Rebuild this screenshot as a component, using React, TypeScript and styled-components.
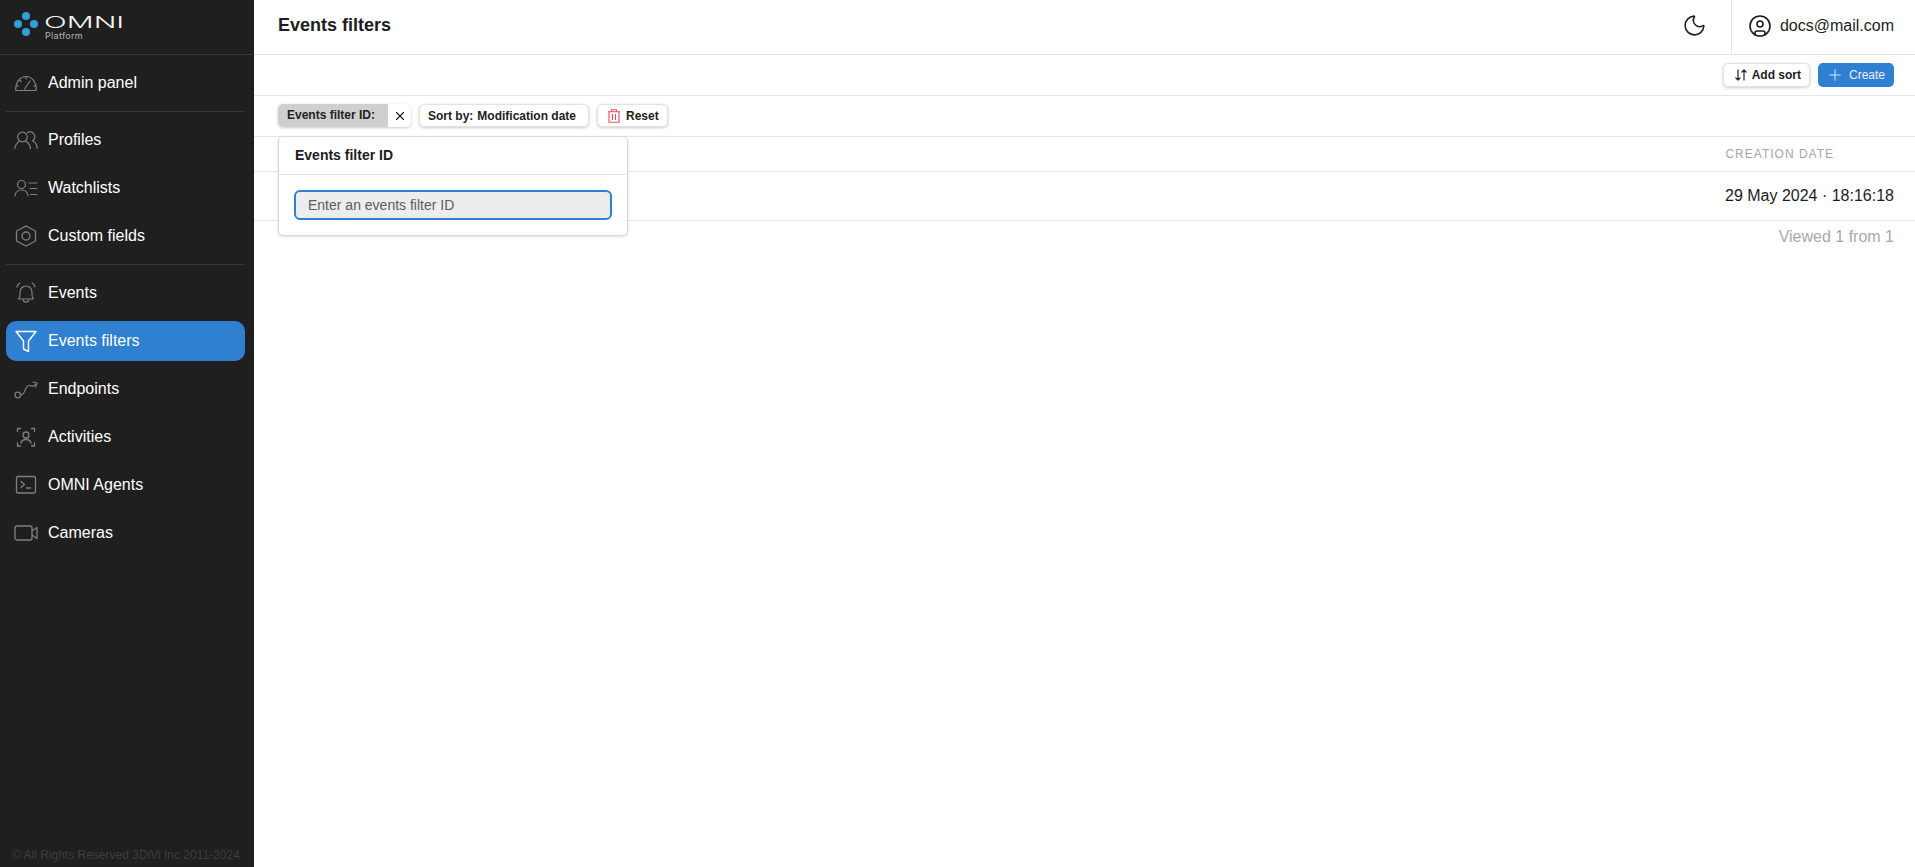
import React from 'react';
import styled, { createGlobalStyle } from 'styled-components';
import { X, Plus, Moon, CircleUser } from 'lucide-react';

const GlobalStyle = createGlobalStyle`
    html, body {
        margin: 0;
        padding: 0;
        height: 100%;
    }
    body {
        font-family: "Liberation Sans", Arial, sans-serif;
        color: #1d1d1d;
        background: #fff;
    }
    * {
        box-sizing: border-box;
    }
`;

const AdminIcon = () => (
    <svg width="24" height="24" viewBox="0 0 24 24" fill="none" stroke="currentColor" strokeWidth="1.2" strokeLinecap="round" strokeLinejoin="round">
        <path d="M2.500 19.500 h19 a.8.8 0 0 0 .8-.9 C22 10 17.500 5.500 12 5.500 S2 10 1.700 18.600 a.8.8 0 0 0 .8.9 Z" />
        <path d="M12 5.500 v2.500 M5.500 9 l1.500 1.500 M2 15 h2.500 M19.500 15 h2.500 M10.500 18 l5.500-8" />
    </svg>
);

const ProfilesIcon = () => (
    <svg width="24" height="24" viewBox="0 0 24 24" fill="none" stroke="currentColor" strokeWidth="1.2" strokeLinecap="round" strokeLinejoin="round">
        <circle cx="8.500" cy="9" r="4.800" />
        <path d="M.8 20.500 c.4-3.600 2.400-6 4.800-7.300 M11.400 13 c2.600 1.200 4.700 3.800 5.100 7.500" />
        <path d="M13.500 4.500 a4.800 4.800 0 0 1 5 8.300 c2.500 1 4.400 3.800 4.700 7.700" />
    </svg>
);

const WatchlistsIcon = () => (
    <svg width="24" height="24" viewBox="0 0 24 24" fill="none" stroke="currentColor" strokeWidth="1.2" strokeLinecap="round" strokeLinejoin="round">
        <circle cx="7.500" cy="8.500" r="4" />
        <path d="M1 20 c.3-3.600 2.200-6 6.500-6 s6.200 2.400 6.500 6" />
        <path d="M15 7 h8 M16 12.500 h7 M16.500 18.500 h6.500" />
    </svg>
);

const FieldsIcon = () => (
    <svg width="24" height="24" viewBox="0 0 24 24" fill="none" stroke="currentColor" strokeWidth="1.3" strokeLinejoin="round">
        <path d="M12 2 L21.500 7 V17 L12 22 L2.500 17 V7 Z" />
        <circle cx="12" cy="12" r="4" />
    </svg>
);

const EventsIcon = () => (
    <svg width="24" height="24" viewBox="0 0 24 24" fill="none" stroke="currentColor" strokeWidth="1.2" strokeLinecap="round" strokeLinejoin="round">
        <path d="M4.500 18 c1.800-1.500 1.500-4 1.500-7 a6 6 0 0 1 12 0 c0 3-.3 5.500 1.500 7 Z" />
        <path d="M9.200 18.500 c.3 3.600 5.300 3.600 5.600 0" />
        <path d="M3 6 c.4-1.800 1.300-3.100 2.700-4 M21 6 c-.4-1.800-1.300-3.100-2.700-4" />
    </svg>
);

const FiltersIcon = () => (
    <svg width="24" height="24" viewBox="0 0 24 24" fill="none" stroke="currentColor" strokeWidth="1.4" strokeLinejoin="round">
        <path d="M2 2.500 H22 L14.500 12 V22.500 L9.500 20 V12 Z" />
    </svg>
);

const EndpointsIcon = () => (
    <svg width="24" height="24" viewBox="0 0 24 24" fill="none" stroke="currentColor" strokeWidth="1.2" strokeLinecap="round" strokeLinejoin="round">
        <circle cx="3.800" cy="18" r="2.800" />
        <path d="M6.500 18 c3 0 3.500-2 4.500-4.500 s1.500-5 4.500-5 c2 0 2.500 1 4 .5 l3-2" />
        <path d="M19 5 l4 1 l-1.500 4" />
    </svg>
);

const ActivitiesIcon = () => (
    <svg width="24" height="24" viewBox="0 0 24 24" fill="none" stroke="currentColor" strokeWidth="1.3" strokeLinecap="round" strokeLinejoin="round">
        <path d="M3.500 6.500 V3.500 h3 M17.500 3.500 H20.500 V6.500 M20.500 18 v3 h-3 M6.500 21 H3.500 V18" />
        <circle cx="12" cy="10" r="3" />
        <path d="M7 18 c.5-2.300 2.300-3.500 5-3.500 s4.500 1.200 5 3.500" />
    </svg>
);

const AgentsIcon = () => (
    <svg width="24" height="24" viewBox="0 0 24 24" fill="none" stroke="currentColor" strokeWidth="1.3" strokeLinecap="round" strokeLinejoin="round">
        <rect x="2.500" y="3.500" width="19" height="16.500" rx="1.500" />
        <path d="M7 8.500 l3.500 3 l-3.500 3 M12.500 15 h4" />
    </svg>
);

const CamerasIcon = () => (
    <svg width="24" height="24" viewBox="0 0 24 24" fill="none" stroke="currentColor" strokeWidth="1.3" strokeLinejoin="round">
        <rect x="1" y="5" width="17" height="14" rx="2" />
        <path d="M18 10 L23 6.500 V17.500 L18 14" />
    </svg>
);

const SortIcon = () => (
    <svg width="12" height="14" viewBox="0 0 12 14" fill="none" stroke="currentColor" strokeWidth="1.2" strokeLinecap="round" strokeLinejoin="round">
        <path d="M3 2 V12 M.8 9.800 L3 12 L5.200 9.800" />
        <path d="M9 12 V2 M6.800 4.200 L9 2 L11.200 4.200" />
    </svg>
);

const TrashIcon = () => (
    <svg width="12" height="14" viewBox="0 0 12 14" fill="none" stroke="#e8505b" strokeWidth="1.1">
        <path d="M0 2.700 H12 M3.500 2.700 V.8 H8.500 V2.700" />
        <path d="M1 2.700 V13.300 H11 V2.700" />
        <path d="M4.500 5 V11 M7.500 5 V11" />
    </svg>
);

const Logo = () => (
    <LogoWrap>
        <svg width="24" height="24" viewBox="0 0 24 24">
            <circle cx="4" cy="12" r="4" fill="#2e9fd6" />
            <circle cx="12" cy="4" r="4" fill="#2e9fd6" />
            <circle cx="12" cy="20" r="4" fill="#2e9fd6" />
            <circle cx="20" cy="12" r="4" fill="#2e9fd6" />
        </svg>
        <LogoText>
            <LogoWord>OMNI</LogoWord>
            <LogoSub>Platform</LogoSub>
        </LogoText>
    </LogoWrap>
);

const groups = [
    [{ title: 'Admin panel', icon: <AdminIcon /> }],
    [
        { title: 'Profiles', icon: <ProfilesIcon /> },
        { title: 'Watchlists', icon: <WatchlistsIcon /> },
        { title: 'Custom fields', icon: <FieldsIcon /> },
    ],
    [
        { title: 'Events', icon: <EventsIcon /> },
        { title: 'Events filters', icon: <FiltersIcon />, active: true },
        { title: 'Endpoints', icon: <EndpointsIcon /> },
        { title: 'Activities', icon: <ActivitiesIcon /> },
        { title: 'OMNI Agents', icon: <AgentsIcon /> },
        { title: 'Cameras', icon: <CamerasIcon /> },
    ],
];

const App = () => {
    return (
        <Page>
            <GlobalStyle />
            <Sidebar>
                <Logo />
                <Nav>
                    {groups.map((group, index) => (
                        <NavGroup key={index}>
                            {group.map((item: any) => (
                                <NavItem key={item.title} $active={item.active}>
                                    <NavIcon $active={item.active}>{item.icon}</NavIcon>
                                    {item.title}
                                </NavItem>
                            ))}
                        </NavGroup>
                    ))}
                </Nav>
                <Copyright>© All Rights Reserved 3DiVi Inc 2011-2024</Copyright>
            </Sidebar>
            <Main>
                <Header>
                    <Title>Events filters</Title>
                    <ThemeToggle>
                        <Moon size={25} strokeWidth={1.5} />
                    </ThemeToggle>
                    <User>
                        <CircleUser size={24} strokeWidth={1.6} />
                        docs@mail.com
                    </User>
                </Header>
                <Toolbar>
                    <ChipButton>
                        <SortIcon />
                        Add sort
                    </ChipButton>
                    <CreateButton>
                        <Plus size={18} strokeWidth={1.2} />
                        Create
                    </CreateButton>
                </Toolbar>
                <Filters>
                    <FilterChip>
                        <FilterLabel>Events filter ID:</FilterLabel>
                        <FilterClear>
                            <X size={14} strokeWidth={2} />
                        </FilterClear>
                    </FilterChip>
                    <SortChip>
                        Sort by:<span>Modification date</span>
                    </SortChip>
                    <ResetChip>
                        <TrashIcon />
                        Reset
                    </ResetChip>
                    <Popup>
                        <PopupTitle>Events filter ID</PopupTitle>
                        <PopupBody>
                            <FilterInput placeholder="Enter an events filter ID" />
                        </PopupBody>
                    </Popup>
                </Filters>
                <TableHead>
                    <HeadCell>Creation date</HeadCell>
                </TableHead>
                <TableRow>
                    <DateCell>29 May 2024 · 18:16:18</DateCell>
                </TableRow>
                <Viewed>Viewed 1 from 1</Viewed>
            </Main>
        </Page>
    );
};

export default App;

const Page = styled.div`
    display: flex;
    height: 867px;
    overflow: hidden;
`;

const Sidebar = styled.aside`
    width: 254px;
    flex-shrink: 0;
    background: #1f1f1f;
    display: flex;
    flex-direction: column;
`;

const LogoWrap = styled.div`
    height: 55px;
    flex-shrink: 0;
    padding: 12px 0 0 14px;
    display: flex;
    align-items: flex-start;
    gap: 6px;
    border-bottom: 1px solid #383838;
`;

const LogoText = styled.div`
    padding-top: 3px;
    display: flex;
    flex-direction: column;
    align-items: flex-start;
`;

const LogoWord = styled.span`
    font-family: Inter, sans-serif;
    font-size: 16px;
    font-weight: 300;
    line-height: 15px;
    color: #f5f5f5;
    white-space: nowrap;
    transform: scaleX(1.87);
    transform-origin: left center;
`;

const LogoSub = styled.span`
    margin-top: 1px;
    font-family: Inter, sans-serif;
    font-size: 9px;
    line-height: 10px;
    letter-spacing: 0.3px;
    color: #b4b4b4;
    padding-left: 1px;
    white-space: nowrap;
`;

const Nav = styled.nav`
    flex: 1;
    padding: 0 9px 0 6px;
`;

const NavGroup = styled.div`
    display: flex;
    flex-direction: column;
    gap: 8px;
    padding: 8px 0 8px;
    border-bottom: 1px solid #383838;

    &:last-child {
        border-bottom: none;
    }
`;

const NavItem = styled.div<{ $active?: boolean }>`
    height: 40px;
    display: flex;
    align-items: center;
    padding-left: 8px;
    gap: 10px;
    border-radius: 10px;
    font-size: 16px;
    color: #fff;
    background: ${props => (props.$active ? '#2f80d0' : 'transparent')};
`;

const NavIcon = styled.span<{ $active?: boolean }>`
    width: 24px;
    height: 24px;
    display: flex;
    color: ${props => (props.$active ? '#fff' : '#808080')};
`;

const Copyright = styled.div`
    font-size: 12px;
    color: #3e3e3e;
    padding: 0 0 5px 12px;
    line-height: 14px;
`;

const Main = styled.main`
    flex: 1;
    min-width: 0;
    display: flex;
    flex-direction: column;
`;

const Header = styled.header`
    height: 55px;
    flex-shrink: 0;
    display: flex;
    align-items: stretch;
    border-bottom: 1px solid #e6e6e6;
    padding-left: 24px;
`;

const Title = styled.h1`
    flex: 1;
    margin: 0;
    font-size: 18px;
    font-weight: 700;
    line-height: 50px;
    color: #1d1d1d;
`;

const ThemeToggle = styled.div`
    width: 72px;
    display: flex;
    align-items: center;
    justify-content: center;
    padding-bottom: 3px;
`;

const User = styled.div`
    border-left: 1px solid #e6e6e6;
    padding: 0 21px 3px 16px;
    display: flex;
    align-items: center;
    gap: 8px;
    font-size: 16px;
`;

const Toolbar = styled.div`
    height: 41px;
    flex-shrink: 0;
    display: flex;
    align-items: flex-start;
    justify-content: flex-end;
    gap: 8px;
    padding: 8px 21px 0 0;
    border-bottom: 1px solid #e6e6e6;
`;

const ChipButton = styled.div`
    height: 24px;
    display: flex;
    align-items: center;
    gap: 5px;
    padding: 0 8px 0 11px;
    background: #fff;
    border: 1px solid #e2e2e2;
    border-radius: 5px;
    box-shadow: 0 1px 3px rgba(0, 0, 0, 0.2);
    font-size: 12px;
    font-weight: 700;
    color: #1d1d1d;
`;

const CreateButton = styled.div`
    height: 24px;
    width: 76px;
    display: flex;
    align-items: center;
    gap: 5px;
    padding-left: 8px;
    background: #2f80d0;
    border-radius: 5px;
    font-size: 12px;
    color: #e8f1fa;
`;

const Filters = styled.div`
    position: relative;
    height: 41px;
    flex-shrink: 0;
    display: flex;
    align-items: flex-start;
    gap: 8px;
    padding: 8px 0 0 24px;
    border-bottom: 1px solid #e6e6e6;
`;

const FilterChip = styled.div`
    height: 23px;
    display: flex;
    background: #fff;
    border-radius: 5px;
    box-shadow: 0 1px 3px rgba(0, 0, 0, 0.2);
    overflow: hidden;
    font-size: 12px;
    font-weight: 700;
`;

const FilterLabel = styled.div`
    width: 110px;
    padding-left: 9px;
    background: #cfcfcf;
    line-height: 23px;
    color: #222;
`;

const FilterClear = styled.div`
    width: 23px;
    display: flex;
    align-items: center;
    justify-content: center;
    color: #222;
`;

const SortChip = styled(ChipButton)`
    height: 23px;
    width: 170px;
    padding: 0 0 0 8px;
    gap: 4px;

    span {
        color: #1d1d1d;
    }
`;

const ResetChip = styled(ChipButton)`
    height: 23px;
    padding: 0 8px 0 10px;
    gap: 6px;
`;

const Popup = styled.div`
    position: absolute;
    z-index: 2;
    left: 24px;
    top: 40px;
    width: 350px;
    height: 100px;
    background: #fff;
    border: 1px solid #d8d8d8;
    border-radius: 5px;
    box-shadow: 0 1px 3px rgba(0, 0, 0, 0.12);
`;

const PopupTitle = styled.div`
    height: 38px;
    padding-left: 16px;
    border-bottom: 1px solid #e6e6e6;
    font-size: 14px;
    font-weight: 700;
    line-height: 36px;
`;

const PopupBody = styled.div`
    padding: 15px 15px 0;
`;

const FilterInput = styled.input`
    width: 100%;
    height: 30px;
    padding: 0 12px;
    background: #ededed;
    border: 2px solid #2f80d0;
    border-radius: 6px;
    outline: none;
    font-family: "Liberation Sans", Arial, sans-serif;
    font-size: 14px;

    &::placeholder {
        color: #5c5c5c;
        opacity: 1;
    }
`;

const TableHead = styled.div`
    height: 35px;
    flex-shrink: 0;
    display: flex;
    align-items: center;
    justify-content: flex-end;
    padding: 0 81px 0 0;
    border-bottom: 1px solid #e6e6e6;
`;

const HeadCell = styled.div`
    font-size: 12px;
    letter-spacing: 1px;
    text-transform: uppercase;
    color: #a6a6a6;
`;

const TableRow = styled.div`
    height: 49px;
    flex-shrink: 0;
    display: flex;
    align-items: center;
    justify-content: flex-end;
    padding-right: 21px;
    border-bottom: 1px solid #e6e6e6;
`;

const DateCell = styled.div`
    font-size: 16px;
    color: #1d1d1d;
`;

const Viewed = styled.div`
    padding: 7px 21px 0 0;
    text-align: right;
    font-size: 16px;
    color: #a8a8a8;
`;
